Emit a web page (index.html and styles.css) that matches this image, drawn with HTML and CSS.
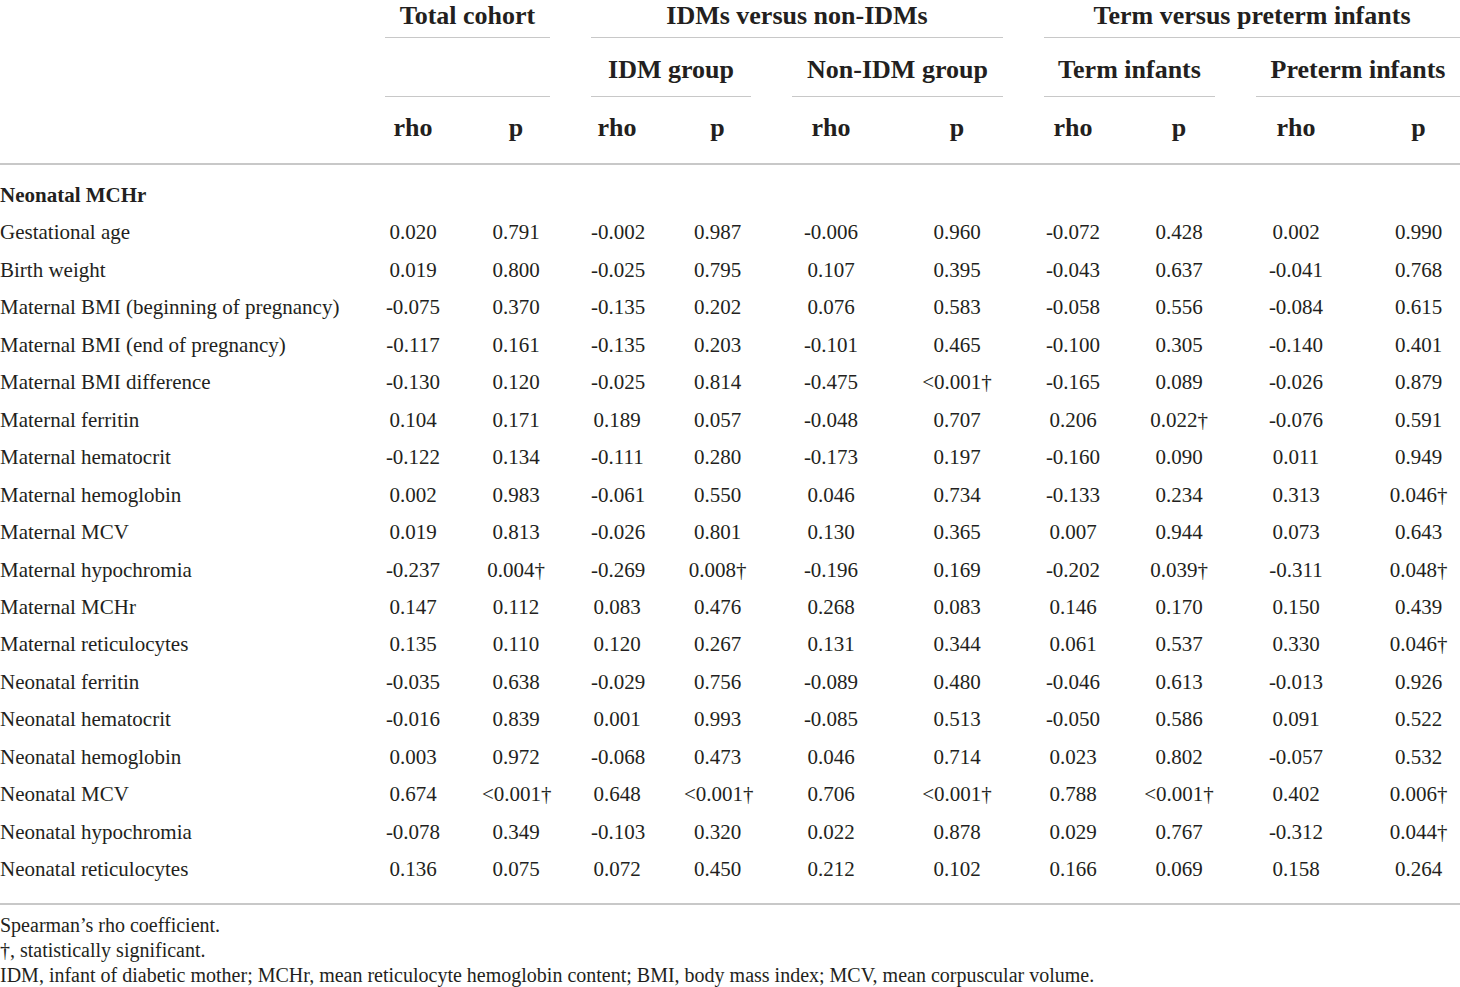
FILE: index.html
```html
<!DOCTYPE html>
<html lang="en">
<head>
    <meta charset="UTF-8">
    <meta name="viewport" content="width=device-width, initial-scale=1.0">
    <title>Neonatal MCHr correlations</title>
    <link rel="stylesheet" href="styles.css">
</head>
<body>
    <div class="sheet">
        <!-- header level 1 -->
        <div class="row">
            <div class="blank"></div>
            <div class="group span2">Total cohort</div>
            <div class="group span4">IDMs versus non-IDMs</div>
            <div class="group span4">Term versus preterm infants</div>
        </div>
        <!-- header level 2 -->
        <div class="row">
            <div class="blank"></div>
            <div class="sub span2"></div>
            <div class="sub span2">IDM group</div>
            <div class="sub span2">Non-IDM group</div>
            <div class="sub span2">Term infants</div>
            <div class="sub span2">Preterm infants</div>
        </div>
        <!-- header level 3 -->
        <div class="row">
            <div class="blank"></div>
            <div class="head">rho</div><div class="head">p</div>
            <div class="head">rho</div><div class="head">p</div>
            <div class="head">rho</div><div class="head">p</div>
            <div class="head">rho</div><div class="head">p</div>
            <div class="head">rho</div><div class="head">p</div>
        </div>
        <div class="rule"></div>

        <div class="section">Neonatal MCHr</div>

        <div class="row">
            <div class="label">Gestational age</div>
            <div class="cell">0.020</div><div class="cell">0.791</div>
            <div class="cell">-0.002</div><div class="cell">0.987</div>
            <div class="cell">-0.006</div><div class="cell">0.960</div>
            <div class="cell">-0.072</div><div class="cell">0.428</div>
            <div class="cell">0.002</div><div class="cell">0.990</div>
        </div>
        <div class="row">
            <div class="label">Birth weight</div>
            <div class="cell">0.019</div><div class="cell">0.800</div>
            <div class="cell">-0.025</div><div class="cell">0.795</div>
            <div class="cell">0.107</div><div class="cell">0.395</div>
            <div class="cell">-0.043</div><div class="cell">0.637</div>
            <div class="cell">-0.041</div><div class="cell">0.768</div>
        </div>
        <div class="row">
            <div class="label">Maternal BMI (beginning of pregnancy)</div>
            <div class="cell">-0.075</div><div class="cell">0.370</div>
            <div class="cell">-0.135</div><div class="cell">0.202</div>
            <div class="cell">0.076</div><div class="cell">0.583</div>
            <div class="cell">-0.058</div><div class="cell">0.556</div>
            <div class="cell">-0.084</div><div class="cell">0.615</div>
        </div>
        <div class="row">
            <div class="label">Maternal BMI (end of pregnancy)</div>
            <div class="cell">-0.117</div><div class="cell">0.161</div>
            <div class="cell">-0.135</div><div class="cell">0.203</div>
            <div class="cell">-0.101</div><div class="cell">0.465</div>
            <div class="cell">-0.100</div><div class="cell">0.305</div>
            <div class="cell">-0.140</div><div class="cell">0.401</div>
        </div>
        <div class="row">
            <div class="label">Maternal BMI difference</div>
            <div class="cell">-0.130</div><div class="cell">0.120</div>
            <div class="cell">-0.025</div><div class="cell">0.814</div>
            <div class="cell">-0.475</div><div class="cell">&lt;0.001†</div>
            <div class="cell">-0.165</div><div class="cell">0.089</div>
            <div class="cell">-0.026</div><div class="cell">0.879</div>
        </div>
        <div class="row">
            <div class="label">Maternal ferritin</div>
            <div class="cell">0.104</div><div class="cell">0.171</div>
            <div class="cell">0.189</div><div class="cell">0.057</div>
            <div class="cell">-0.048</div><div class="cell">0.707</div>
            <div class="cell">0.206</div><div class="cell">0.022†</div>
            <div class="cell">-0.076</div><div class="cell">0.591</div>
        </div>
        <div class="row">
            <div class="label">Maternal hematocrit</div>
            <div class="cell">-0.122</div><div class="cell">0.134</div>
            <div class="cell">-0.111</div><div class="cell">0.280</div>
            <div class="cell">-0.173</div><div class="cell">0.197</div>
            <div class="cell">-0.160</div><div class="cell">0.090</div>
            <div class="cell">0.011</div><div class="cell">0.949</div>
        </div>
        <div class="row">
            <div class="label">Maternal hemoglobin</div>
            <div class="cell">0.002</div><div class="cell">0.983</div>
            <div class="cell">-0.061</div><div class="cell">0.550</div>
            <div class="cell">0.046</div><div class="cell">0.734</div>
            <div class="cell">-0.133</div><div class="cell">0.234</div>
            <div class="cell">0.313</div><div class="cell">0.046†</div>
        </div>
        <div class="row">
            <div class="label">Maternal MCV</div>
            <div class="cell">0.019</div><div class="cell">0.813</div>
            <div class="cell">-0.026</div><div class="cell">0.801</div>
            <div class="cell">0.130</div><div class="cell">0.365</div>
            <div class="cell">0.007</div><div class="cell">0.944</div>
            <div class="cell">0.073</div><div class="cell">0.643</div>
        </div>
        <div class="row">
            <div class="label">Maternal hypochromia</div>
            <div class="cell">-0.237</div><div class="cell">0.004†</div>
            <div class="cell">-0.269</div><div class="cell">0.008†</div>
            <div class="cell">-0.196</div><div class="cell">0.169</div>
            <div class="cell">-0.202</div><div class="cell">0.039†</div>
            <div class="cell">-0.311</div><div class="cell">0.048†</div>
        </div>
        <div class="row">
            <div class="label">Maternal MCHr</div>
            <div class="cell">0.147</div><div class="cell">0.112</div>
            <div class="cell">0.083</div><div class="cell">0.476</div>
            <div class="cell">0.268</div><div class="cell">0.083</div>
            <div class="cell">0.146</div><div class="cell">0.170</div>
            <div class="cell">0.150</div><div class="cell">0.439</div>
        </div>
        <div class="row">
            <div class="label">Maternal reticulocytes</div>
            <div class="cell">0.135</div><div class="cell">0.110</div>
            <div class="cell">0.120</div><div class="cell">0.267</div>
            <div class="cell">0.131</div><div class="cell">0.344</div>
            <div class="cell">0.061</div><div class="cell">0.537</div>
            <div class="cell">0.330</div><div class="cell">0.046†</div>
        </div>
        <div class="row">
            <div class="label">Neonatal ferritin</div>
            <div class="cell">-0.035</div><div class="cell">0.638</div>
            <div class="cell">-0.029</div><div class="cell">0.756</div>
            <div class="cell">-0.089</div><div class="cell">0.480</div>
            <div class="cell">-0.046</div><div class="cell">0.613</div>
            <div class="cell">-0.013</div><div class="cell">0.926</div>
        </div>
        <div class="row">
            <div class="label">Neonatal hematocrit</div>
            <div class="cell">-0.016</div><div class="cell">0.839</div>
            <div class="cell">0.001</div><div class="cell">0.993</div>
            <div class="cell">-0.085</div><div class="cell">0.513</div>
            <div class="cell">-0.050</div><div class="cell">0.586</div>
            <div class="cell">0.091</div><div class="cell">0.522</div>
        </div>
        <div class="row">
            <div class="label">Neonatal hemoglobin</div>
            <div class="cell">0.003</div><div class="cell">0.972</div>
            <div class="cell">-0.068</div><div class="cell">0.473</div>
            <div class="cell">0.046</div><div class="cell">0.714</div>
            <div class="cell">0.023</div><div class="cell">0.802</div>
            <div class="cell">-0.057</div><div class="cell">0.532</div>
        </div>
        <div class="row">
            <div class="label">Neonatal MCV</div>
            <div class="cell">0.674</div><div class="cell">&lt;0.001†</div>
            <div class="cell">0.648</div><div class="cell">&lt;0.001†</div>
            <div class="cell">0.706</div><div class="cell">&lt;0.001†</div>
            <div class="cell">0.788</div><div class="cell">&lt;0.001†</div>
            <div class="cell">0.402</div><div class="cell">0.006†</div>
        </div>
        <div class="row">
            <div class="label">Neonatal hypochromia</div>
            <div class="cell">-0.078</div><div class="cell">0.349</div>
            <div class="cell">-0.103</div><div class="cell">0.320</div>
            <div class="cell">0.022</div><div class="cell">0.878</div>
            <div class="cell">0.029</div><div class="cell">0.767</div>
            <div class="cell">-0.312</div><div class="cell">0.044†</div>
        </div>
        <div class="row">
            <div class="label">Neonatal reticulocytes</div>
            <div class="cell">0.136</div><div class="cell">0.075</div>
            <div class="cell">0.072</div><div class="cell">0.450</div>
            <div class="cell">0.212</div><div class="cell">0.102</div>
            <div class="cell">0.166</div><div class="cell">0.069</div>
            <div class="cell">0.158</div><div class="cell">0.264</div>
        </div>

        <div class="rule bottom"></div>
        <div class="notes">
            <p>Spearman’s rho coefficient.</p>
            <p>†, statistically significant.</p>
            <p>IDM, infant of diabetic mother; MCHr, mean reticulocyte hemoglobin content; BMI, body mass index; MCV, mean corpuscular volume.</p>
        </div>
    </div>
</body>
</html>
```

FILE: styles.css
```css
* {
    box-sizing: border-box;
    margin: 0;
    padding: 0;
}
body {
    font-family: "Liberation Serif", "Times New Roman", serif;
    color: #231f20;
    background-color: #fff;
}
.sheet {
    display: grid;
    grid-template-columns: 344px 56px 68px 52px 67px 78px 92px 58px 72px 80px 83px;
    column-gap: 41px;
    width: 1460px;
}
.row {
    display: contents;
}
.span2 {
    grid-column: span 2;
}
.span4 {
    grid-column: span 4;
}
.group, .sub, .head {
    font-size: 26px;
    font-weight: bold;
    line-height: 24px;
    text-align: center;
    white-space: nowrap;
}
.group {
    height: 38px;
    padding-top: 1px;
    line-height: 30px;
    border-bottom: 1px solid #c8c8c8;
}
.sub {
    height: 59px;
    padding-top: 20px;
    border-bottom: 1px solid #c8c8c8;
}
.head {
    height: 66px;
    padding-top: 19px;
}
.rule {
    grid-column: 1 / -1;
    height: 2px;
    background-color: #c8c8c8;
}
.rule.bottom {
    margin-top: 14px;
}
.section {
    grid-column: 1 / -1;
    margin-top: 12px;
    font-size: 21px;
    font-weight: bold;
    line-height: 37.45px;
}
.label, .cell {
    font-size: 21px;
    line-height: 37.45px;
    white-space: nowrap;
}
.cell {
    text-align: center;
}
.notes {
    grid-column: 1 / -1;
    padding-top: 8px;
    font-size: 20px;
    line-height: 25px;
}
```
